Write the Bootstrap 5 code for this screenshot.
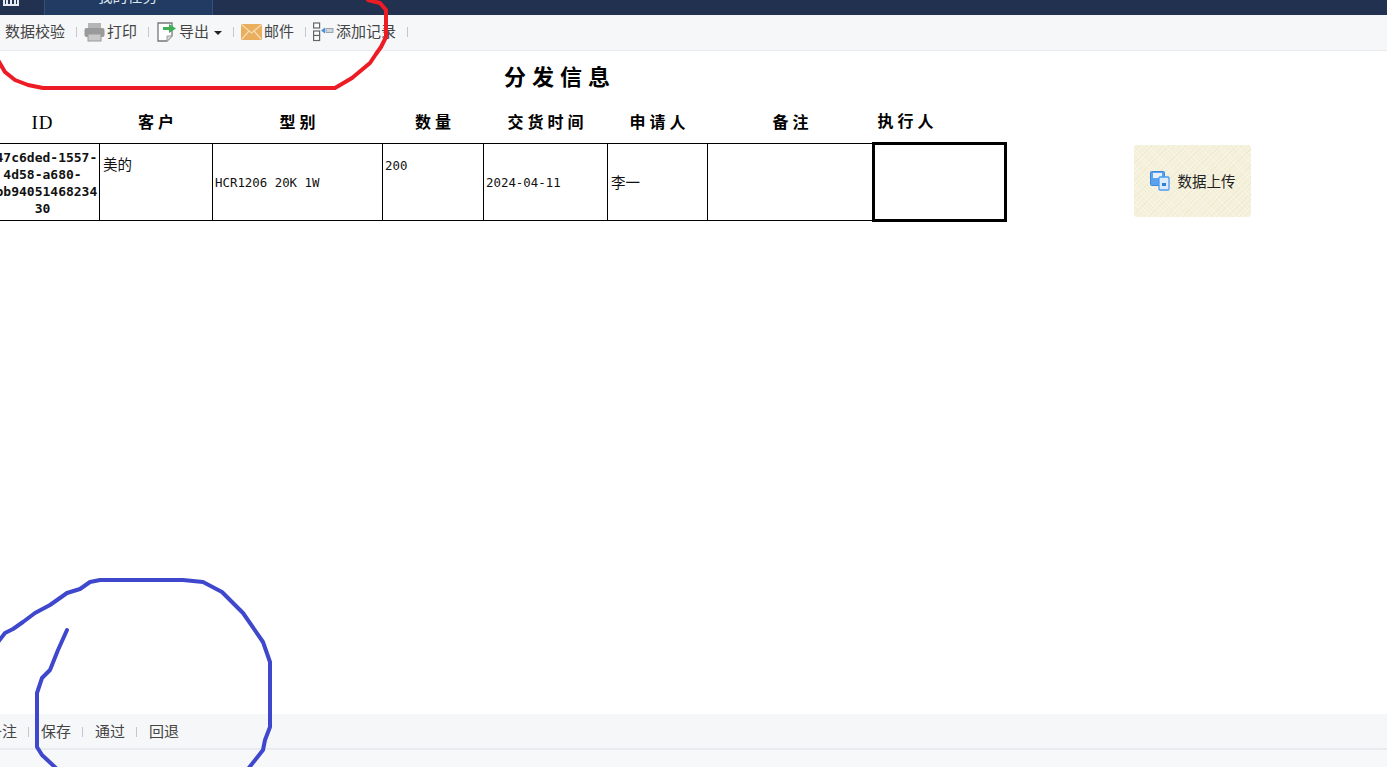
<!DOCTYPE html>
<html lang="zh-CN">
<head>
<meta charset="utf-8">
<title>分发信息</title>
<link href="https://cdn.jsdelivr.net/npm/bootstrap@5.3.0/dist/css/bootstrap.min.css" rel="stylesheet">
<style>
html,body{height:767px;overflow:hidden}
body{font-family:"Liberation Sans","Noto Sans CJK SC",sans-serif;background:#fff;color:#000;position:relative}
.shell{height:767px}
.topbar{height:15px;background:#22314f;overflow:hidden;flex:none}
.home-ico{width:16px;height:15px;margin-left:3px;margin-right:25px;flex:none}
.tab-cur{width:169px;height:15px;background:#213b63;border-left:1px solid #34507c;border-right:1px solid #34507c;color:#dfe6f0;font-size:15px;line-height:15px;text-align:center}
.tab-cur span{display:block;margin-top:-11px;margin-left:-2px}
.toolstrip{background:#f6f7f9;color:#444;font-size:15px;flex:none;white-space:nowrap;font-family:"Noto Sans CJK SC","Liberation Sans",sans-serif}
.strip-top{height:36px;border-bottom:1px solid #e8eaed;padding-left:5px;padding-bottom:2px}
.strip-bot{height:36px;border-bottom:2px solid #e9ebef;margin-left:-13px;padding-top:1px}
.vsep{width:1px;height:10px;background:#c4c6ca;margin:0 7px 0 11px;flex:none}
.vsep.wide-after{margin-right:8px}
.strip-bot .vsep{margin:0 12px 0 11px}
.tool-ico{flex:none;margin-right:2px}
.dd-caret{width:0;height:0;border-left:4px solid transparent;border-right:4px solid transparent;border-top:4px solid #222;margin-left:5px;margin-top:3px}
.pagebody{min-height:0}
.form-head{font-family:"Noto Sans CJK SC",sans-serif;font-weight:700;font-size:22px;letter-spacing:6px;line-height:27px;padding-left:504px;padding-top:11px;height:52px;white-space:nowrap}
.dist-wrap{margin-left:-15px;gap:127px}
.dist-table{border-collapse:collapse;table-layout:fixed;width:1020px;flex:none}
.dist-table th{height:40px;padding:0 0 4px 4px;text-align:center;font-family:"Noto Sans CJK SC",sans-serif;font-size:16px;letter-spacing:4px;font-weight:700;vertical-align:middle}
.dist-table th.id-h{font-family:"Liberation Serif",serif;font-size:19px;font-weight:400;letter-spacing:1px;padding:0}
.dist-table th.left-h{text-align:left;padding-left:4px}
.dist-table td{border:1px solid #000;height:77px;padding:3px 3px 0 2px;font-family:"DejaVu Sans Mono",monospace;font-size:12.4px;vertical-align:middle;color:#111}
.dist-table td.cjk{font-family:"Noto Sans CJK SC",sans-serif;font-size:14.5px;padding:1px 0 0 3px}
.dist-table td.up{vertical-align:top;padding-top:12px;line-height:20px}
.dist-table td.cjk.up{padding-top:10px}
.dist-table td.uid{font-weight:700;font-size:13px;line-height:17px;text-align:center;padding:2px 0 0;white-space:nowrap}
.dist-table td.heavy{border:3px solid #000}
.upload-tile{width:117px;height:72px;margin-bottom:5px;flex:none;border:0;border-radius:3px;padding:0;color:#222;font-family:"Noto Sans CJK SC",sans-serif;font-size:14.5px;
background-color:#f4f0da;background-image:repeating-linear-gradient(45deg,rgba(255,255,255,.3) 0 1px,transparent 1px 3px),repeating-linear-gradient(-45deg,rgba(214,200,150,.15) 0 1px,transparent 1px 4px)}
.foot-strip{height:17px;background:#f7f8fa;flex:none}
.ink-layer{position:absolute;left:0;top:0;pointer-events:none}
</style>
</head>
<body>
<div class="shell d-flex flex-column">
  <div class="topbar d-flex">
    <svg class="home-ico" viewBox="0 0 16 15"><path d="M1 0v5h14V0M4 0v5M8 0v5M12 0v5" fill="none" stroke="#e6eaf0" stroke-width="2"/></svg>
    <div class="tab-cur"><span>我的任务</span></div>
  </div>

  <div class="toolstrip strip-top d-flex align-items-center">
    <span>数据校验</span><i class="vsep"></i>
    <svg class="tool-ico" width="21" height="20" viewBox="0 0 21 20"><rect x="4" y="1" width="13" height="6" fill="#b5b5b5"/><rect x="0.5" y="6" width="20" height="9" rx="2" fill="#9a9a9a"/><rect x="4" y="12" width="13" height="7" fill="#c9c9c9" stroke="#9a9a9a"/></svg>
    <span>打印</span><i class="vsep wide-after"></i>
    <svg class="tool-ico" width="20" height="20" viewBox="0 0 20 20"><path d="M1 1h14v13l-5 5H1z" fill="#fff" stroke="#777" stroke-width="1.3"/><path d="M10 19v-5h5" fill="#ddd" stroke="#999"/><path d="M6 5h6V2l7 4.500-7 4.500V8H6z" fill="#3fae57"/></svg>
    <span>导出</span><i class="dd-caret"></i><i class="vsep"></i>
    <svg class="tool-ico" width="21" height="16" viewBox="0 0 21 16"><rect width="21" height="16" rx="1.500" fill="#e9ae5e"/><path d="M1 1l9.500 8L20 1M1 15l7-8M20 15l-7-8" fill="none" stroke="#f7dcb4" stroke-width="1.200"/></svg>
    <span>邮件</span><i class="vsep"></i>
    <svg class="tool-ico" width="21" height="20" viewBox="0 0 21 20"><g fill="#fff" stroke="#666" stroke-width="1.200"><rect x="0.600" y="1" width="6" height="5"/><rect x="0.600" y="9" width="6" height="4.500"/><rect x="0.600" y="13.500" width="6" height="5"/></g><rect x="13" y="6.500" width="7" height="4" fill="#cfd6de" stroke="#8a94a0" stroke-width=".8"/><path d="M8 8.500l4-3v6z" fill="#4a90d9"/></svg>
    <span>添加记录</span><i class="vsep"></i>
  </div>

  <div class="pagebody flex-grow-1">
    <div class="form-head">分发信息</div>
    <div class="dist-wrap d-flex align-items-end">
      <table class="dist-table">
        <colgroup><col style="width:114px"><col style="width:113px"><col style="width:170px"><col style="width:101px"><col style="width:124px"><col style="width:100px"><col style="width:166px"><col style="width:132px"></colgroup>
        <thead><tr><th class="id-h">ID</th><th>客户</th><th>型别</th><th>数量</th><th>交货时间</th><th>申请人</th><th>备注</th><th class="left-h">执行人</th></tr></thead>
        <tbody><tr>
          <td class="uid">a47c6ded-1557-<br>4d58-a680-<br>0bb94051468234<br>30</td>
          <td class="cjk up">美的</td>
          <td>HCR1206 20K 1W</td>
          <td class="up">200</td>
          <td>2024-04-11</td>
          <td class="cjk">李一</td>
          <td></td>
          <td class="heavy"></td>
        </tr></tbody>
      </table>
      <button type="button" class="upload-tile d-flex align-items-center justify-content-center gap-1">
        <svg width="20" height="20" viewBox="0 0 20 20"><rect x="0.500" y="0.500" width="14" height="14" rx="1" fill="#5aa2ee" stroke="#3c86dc"/><rect x="3" y="2" width="9" height="5" fill="#e8f1fb"/><rect x="9" y="6" width="10" height="13" rx="1" fill="#dcecff" stroke="#4b9bf0" stroke-width="1.300"/><rect x="12" y="12" width="4" height="3" fill="#2f7fd8"/></svg>
        <span class="ms-1">数据上传</span>
      </button>
    </div>
  </div>

  <div class="toolstrip strip-bot d-flex align-items-center">
    <span>备注</span><i class="vsep"></i><span>保存</span><i class="vsep"></i><span>通过</span><i class="vsep"></i><span>回退</span>
  </div>
  <div class="foot-strip"></div>
</div>

<svg class="ink-layer" width="1387" height="767" viewBox="0 0 1387 767" fill="none" stroke-width="4" stroke-linejoin="round" stroke-linecap="round">
  <path stroke="#ed1c24" d="M-2 60L5 72L15 80L28 85L43 88L335 88L352 78L370 63L376 54L381 47L386 37L386 10L380 3L368 0"/>
  <path stroke="#3f48cc" d="M-2 642L5 633L13 629L23 622L35 613L50 605L67 593L80 589L90 582L100 580L183 580L203 582L222 592L243 613L263 642L270 662L270 727L265 740L263 750L248 769"/>
  <path stroke="#3f48cc" d="M67 630L58 650L50 670L42 678L37 693L37 747L42 755L57 769"/>
</svg>
<script src="https://cdn.jsdelivr.net/npm/bootstrap@5.3.0/dist/js/bootstrap.bundle.min.js"></script>
</body>
</html>
